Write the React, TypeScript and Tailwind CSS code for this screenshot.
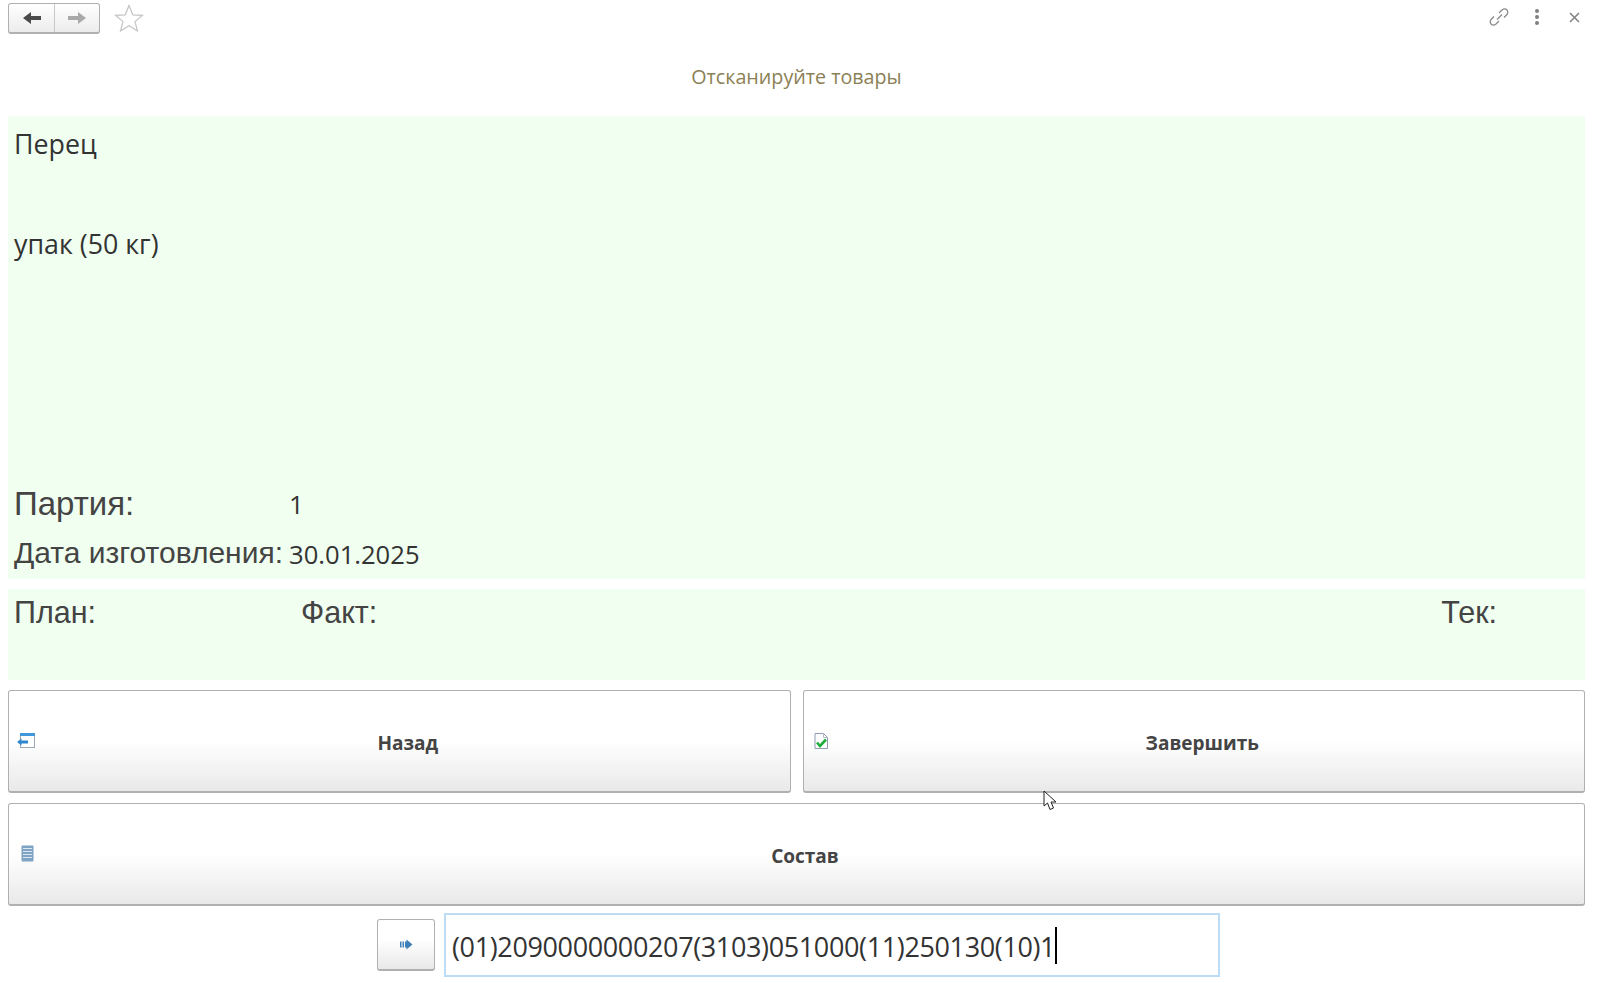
const BackIcon = () => (
  <svg width="20" height="18" viewBox="0 0 20 18">
    <rect x="4.5" y="1.5" width="14" height="14" fill="#fff" stroke="#9aa6b2" />
    <rect x="4" y="1" width="15" height="3" fill="#3f97dc" />
    <path d="M1 10 L5.5 6.5 V8.5 H12 V11.5 H5.5 V13.5 Z" fill="#2f86cf" />
  </svg>
)

const DoneIcon = () => (
  <svg width="15" height="18" viewBox="0 0 15 18">
    <path d="M1 1.5 H9.5 L13.5 5.5 V16.5 H1 Z" fill="#fff" stroke="#8f9bb0" />
    <path d="M9.5 1.5 V5.5 H13.5" fill="none" stroke="#b5bdc9" />
    <path d="M3 10.5 L6 14 L12 7.5" fill="none" stroke="#1fae3c" strokeWidth="2.6" />
  </svg>
)

const ListIcon = () => (
  <svg width="13" height="17" viewBox="0 0 13 17">
    <rect x="0.5" y="0.5" width="12" height="16" rx="1" fill="#7fa3c4" />
    <path d="M2 3.5 H11 M2 6.5 H11 M2 9.5 H11 M2 12.5 H11" stroke="#dbe6f0" strokeWidth="1" />
  </svg>
)

const BigButton = ({ label, icon, iconPos }: { label: string; icon: React.ReactNode; iconPos: string }) => (
  <button className="relative flex-1 h-[103px] rounded-[3px] border border-[#b0b0b0] border-b-2 bg-gradient-to-b from-white from-50% to-[#e9e9e9] flex items-center justify-center">
    <span className={`absolute ${iconPos} flex`}>{icon}</span>
    <span className="ml-[17px] pt-[4px] text-[19px] font-bold text-[#444] font-['Open_Sans',sans-serif]">{label}</span>
  </button>
)

export default function App() {
  return (
    <div className="w-[1598px] h-[983px] overflow-hidden bg-white pl-2 pr-[13px] font-['Open_Sans',sans-serif] relative">
      {/* top bar */}
      <div className="h-[36px] pt-[3px] flex items-start justify-between">
        <div className="flex items-start">
          <div className="flex w-[92px] h-[31px] rounded-[3px] border border-[#b0b0b0] border-b-2 bg-gradient-to-b from-white to-[#ececec]">
            <div className="w-[46px] flex items-center justify-center border-r border-[#c8c8c8]">
              <svg width="18" height="14" viewBox="0 0 18 14"><path d="M0 7 L8 1 V5 H18 V9 H8 V13 Z" fill="#4a4a4a" /></svg>
            </div>
            <div className="flex-1 flex items-center justify-center">
              <svg width="18" height="14" viewBox="0 0 18 14"><path d="M18 7 L10 1 V5 H0 V9 H10 V13 Z" fill="#a9a9a9" /></svg>
            </div>
          </div>
          <svg className="ml-[14px] mt-[1px]" width="30" height="28" viewBox="0 0 30 28">
            <path d="M15 1.5 L18.8 10.8 L28.5 11.3 L21 17.6 L23.5 27 L15 21.8 L6.5 27 L9 17.6 L1.5 11.3 L11.2 10.8 Z" fill="#fff" stroke="#c4c4c4" strokeWidth="1.2" />
          </svg>
        </div>
        <div className="flex items-center pr-[5px] pt-[4px]">
          <svg width="22" height="20" viewBox="0 0 22 20" fill="none" stroke="#8a8a8a" strokeWidth="1.3">
            <path d="M9 12.5 L14 7.5" />
            <path d="M11 6 L14 3 C16 1.5 18 2 19 3 C20 4.5 20 6 19 7.5 L16 10.5" />
            <path d="M11 14 L8 17 C6 18.5 4 18 3 17 C2 15.5 2 14 3 12.5 L6 9.5" />
          </svg>
          <div className="ml-[25px] flex flex-col gap-[2px]">
            <span className="w-[4px] h-[4px] rounded-full bg-[#808080]" />
            <span className="w-[4px] h-[4px] rounded-full bg-[#808080]" />
            <span className="w-[4px] h-[4px] rounded-full bg-[#808080]" />
          </div>
          <svg width="11" height="11" viewBox="0 0 11 11" stroke="#808080" strokeWidth="1.5" className="ml-[30px]">
            <path d="M1 1 L10 10 M10 1 L1 10" />
          </svg>
        </div>
      </div>

      <div className="h-[80px] flex items-center justify-center text-[19.7px] text-[#8b7f55] pt-[1px]">Отсканируйте товары</div>

      {/* product */}
      <div className="h-[463px] bg-[#f0fff0] px-[6px] flex flex-col text-[#333]">
        <div className="text-[26.8px] leading-[36px] mt-[10px]">Перец</div>
        <div className="text-[26.8px] leading-[36px] mt-[64px]">упак (50 кг)</div>
        <div className="mt-auto flex items-center h-[50px]">
          <span className="w-[275px] pb-[4px] text-[33px] text-[#444] font-['Liberation_Sans',sans-serif]">Партия:</span>
          <span className="pb-[4px] text-[26px]">1</span>
        </div>
        <div className="flex items-center h-[48px]">
          <span className="w-[275px] pb-[6px] text-[30px] text-[#444] font-['Liberation_Sans',sans-serif] whitespace-nowrap">Дата изготовления:</span>
          <span className="text-[25.6px]">30.01.2025</span>
        </div>
      </div>

      {/* totals */}
      <div className="mt-[10px] h-[91px] bg-[#f0fff0] px-[6px] pt-[3px] flex text-[30.5px] leading-[40px] text-[#444] font-['Liberation_Sans',sans-serif]">
        <span className="w-[287px]">План:</span>
        <span>Факт:</span>
        <span className="ml-auto mr-[82px]">Тек:</span>
      </div>

      {/* buttons */}
      <div className="mt-[10px] flex gap-3">
        <BigButton label="Назад" icon={<BackIcon />} iconPos="left-[7px] top-[41px]" />
        <BigButton label="Завершить" icon={<DoneIcon />} iconPos="left-[10px] top-[41px]" />
      </div>
      <div className="mt-[10px] flex">
        <BigButton label="Состав" icon={<ListIcon />} iconPos="left-[12px] top-[41px]" />
      </div>

      {/* scan row */}
      <div className="mt-[7px] flex items-center pl-[369px]">
        <button className="w-[58px] h-[52px] rounded-[3px] border border-[#b0b0b0] border-b-2 bg-gradient-to-b from-white from-40% to-[#e9e9e9] flex items-center justify-center">
          <svg width="13" height="11" viewBox="0 0 13 11">
            <path d="M0 2.5 H1.5 V8.5 H0 Z M2.5 2.5 H4 V8.5 H2.5 Z M5 2.5 H6.5 V0.5 L12.5 5.5 L6.5 10.5 V8.5 H5 Z" fill="#3f7fb8" />
          </svg>
        </button>
        <div className="ml-[9px] w-[776px] h-[64px] border-2 border-[#bcdcf5] bg-white flex items-center pl-[6px] text-[27px] tracking-[-0.37px] text-[#333]">
          <span className="whitespace-nowrap pt-[4px]">(01)2090000000207(3103)051000(11)250130(10)1</span>
          <span className="w-[2px] h-[37px] bg-black" />
        </div>
      </div>

      {/* mouse cursor */}
      <svg className="absolute left-[1043px] top-[790px]" width="16" height="22" viewBox="0 0 16 22">
        <path d="M1 1 V16 L4.5 13 L7 19.5 L10.5 18 L8 12 H13 Z" fill="#fff" stroke="#222" strokeWidth="1" />
      </svg>
    </div>
  )
}
